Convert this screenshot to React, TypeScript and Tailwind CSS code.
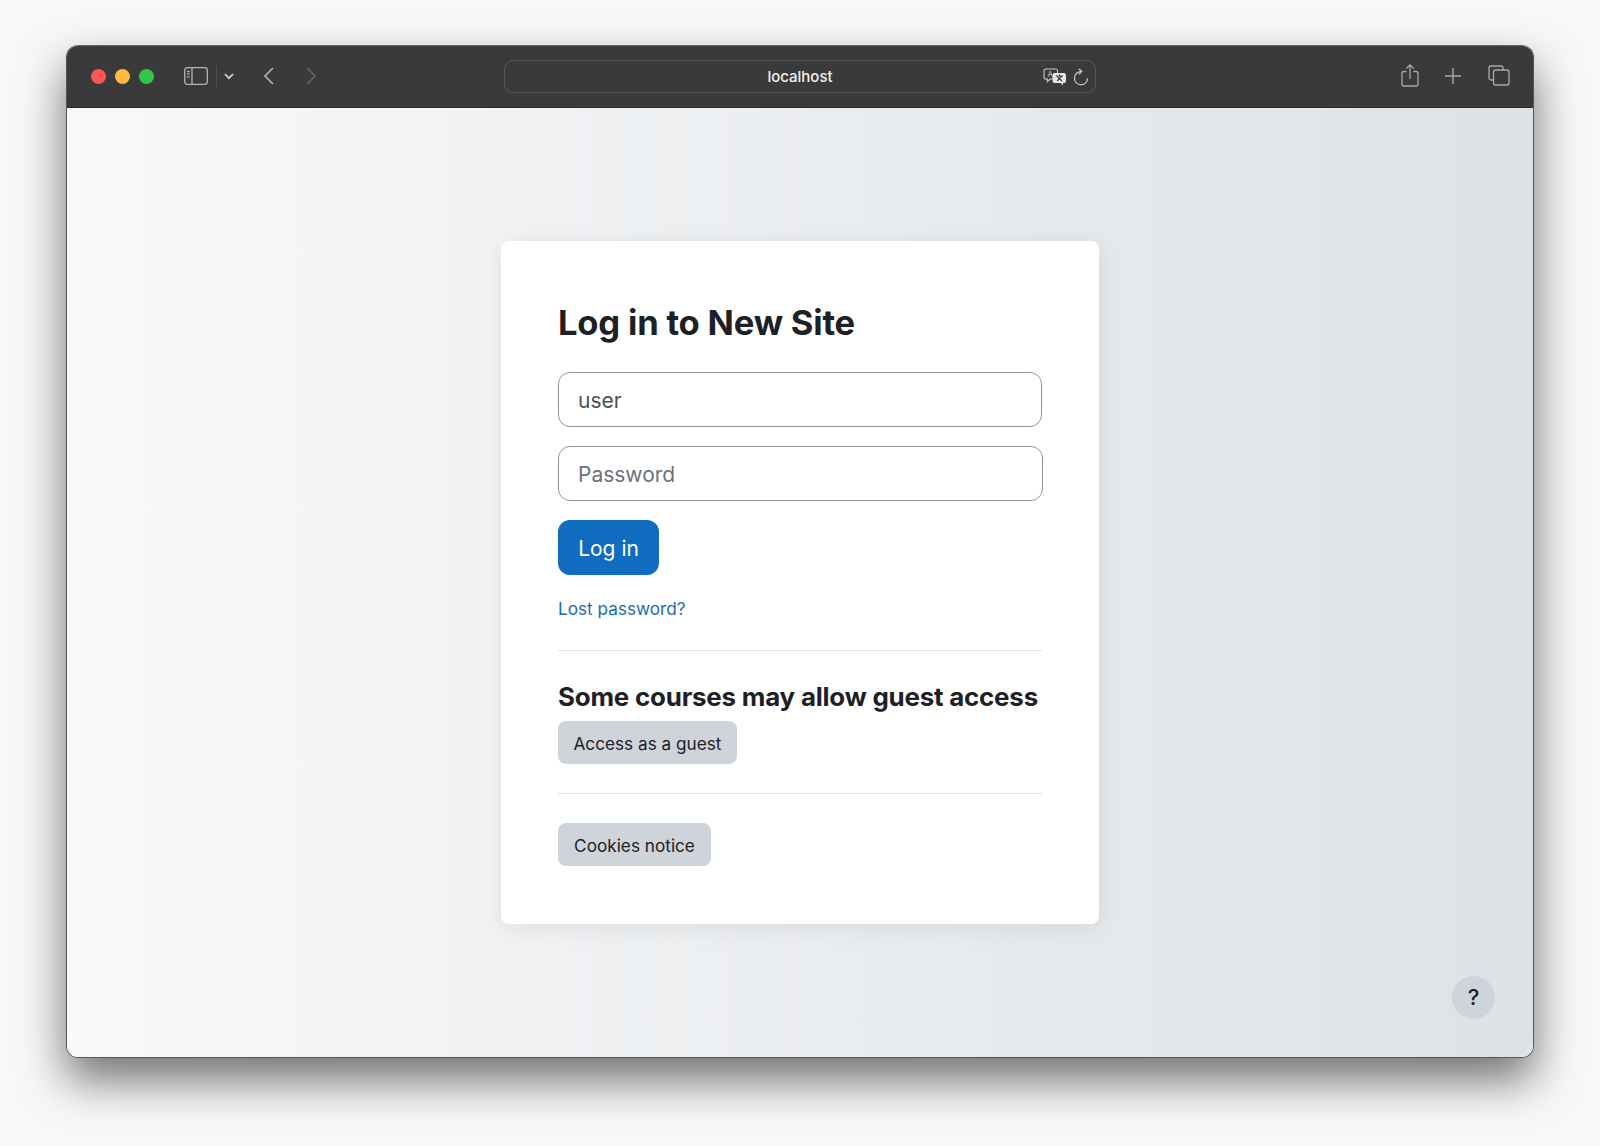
const font = "font-['Inter','Liberation_Sans',sans-serif]";

function SidebarIcon() {
  return (
    <svg width="24" height="18" viewBox="0 0 24 18" fill="none" stroke="#b4b4b4" strokeWidth="1.3">
      <rect x="0.7" y="0.7" width="22.6" height="16.6" rx="2.5" />
      <path d="M8 1v16" />
      <path d="M3 4.5h2.6M3 7.2h2.6M3 9.9h2.6" />
    </svg>
  );
}

function TranslateIcon() {
  return (
    <svg width="24" height="18" viewBox="0 0 24 18" fill="none">
      <path d="M3 1h9.5a2 2 0 0 1 2 2v6a2 2 0 0 1-2 2H7l-2.6 2.6V11H3a2 2 0 0 1-2-2V3a2 2 0 0 1 2-2z" stroke="#c8c8c8" strokeWidth="1.1" />
      <text x="4.6" y="9" fontSize="8" fill="#c8c8c8" fontFamily="Inter, sans-serif">A</text>
      <path d="M11.5 5h9.5a2 2 0 0 1 2 2v6a2 2 0 0 1-2 2h-1v2.6L17.5 15h-6a2 2 0 0 1-2-2V7a2 2 0 0 1 2-2z" fill="#e4e4e4" />
      <path d="M13 8h7M16.5 6.5V8M14.2 13l4.8-5M19 13l-4.5-4" stroke="#3a3a3a" strokeWidth="1.1" />
    </svg>
  );
}

function ReloadIcon() {
  return (
    <svg width="16" height="18" viewBox="0 0 16 18" fill="none" stroke="#c8c8c8" strokeWidth="1.2">
      <path d="M8 3.6A6.6 6.6 0 1 0 14.6 10.2" />
      <path d="M5.8 0.8 8.8 3.6 5.8 6.4" />
    </svg>
  );
}

function ShareIcon() {
  return (
    <svg width="18" height="23" viewBox="0 0 18 23" fill="none" stroke="#a8a8a8" strokeWidth="1.3">
      <path d="M5.5 7.5H3a2 2 0 0 0-2 2v10.5a2 2 0 0 0 2 2h12a2 2 0 0 0 2-2V9.5a2 2 0 0 0-2-2h-2.5" />
      <path d="M9 15V1M5.3 4.5 9 1l3.7 3.5" />
    </svg>
  );
}

function TabsIcon() {
  return (
    <svg width="22" height="21" viewBox="0 0 22 21" fill="none" stroke="#a8a8a8" strokeWidth="1.3">
      <path d="M5 15H3a2 2 0 0 1-2-2V3a2 2 0 0 1 2-2h10a2 2 0 0 1 2 2v2" />
      <rect x="5.5" y="5" width="15.5" height="15" rx="2.2" />
    </svg>
  );
}

function TitleBar() {
  return (
    <div className="h-[62px] shrink-0 bg-[#3a3a3a] flex items-center border-b border-[#2a2a2a] relative">
      <div className="flex items-center gap-[9px] ml-[24px]">
        <span className="w-[15px] h-[15px] rounded-full bg-[#fc5753]" />
        <span className="w-[15px] h-[15px] rounded-full bg-[#fdbc40]" />
        <span className="w-[15px] h-[15px] rounded-full bg-[#33c748]" />
      </div>
      <div className="ml-[30px] mb-[2px] flex items-center">
        <SidebarIcon />
      </div>
      <div className="w-px h-[21px] bg-[#4e4e4e] ml-[8px]" />
      <svg className="ml-[7px]" width="10" height="7" viewBox="0 0 10 7" fill="none" stroke="#d0d0d0" strokeWidth="1.7">
        <path d="M1 1.2 5 5.2l4-4" />
      </svg>
      <svg className="ml-[29px] mb-[2px]" width="12" height="18" viewBox="0 0 12 18" fill="none" stroke="#b4b4b4" strokeWidth="1.7">
        <path d="M10 1 2 9l8 8" />
      </svg>
      <svg className="ml-[30px] mb-[2px]" width="12" height="18" viewBox="0 0 12 18" fill="none" stroke="#646464" strokeWidth="1.7">
        <path d="M2 1l8 8-8 8" />
      </svg>
      <div className="ml-[187px] w-[592px] h-[33px] rounded-[9px] border border-[#565656] flex items-center justify-end relative pr-[6px]">
        <span className="absolute inset-0 flex items-center justify-center pt-[2px] text-[15px] font-medium text-[#f0f0f0]">localhost</span>
        <TranslateIcon />
        <span className="ml-[6px] flex"><ReloadIcon /></span>
      </div>
      <div className="flex items-center ml-auto mr-[23px] mb-[2px]">
        <ShareIcon />
        <svg className="ml-[26px]" width="16" height="16" viewBox="0 0 16 16" fill="none" stroke="#a8a8a8" strokeWidth="1.4">
          <path d="M8 0v16M0 8h16" />
        </svg>
        <span className="ml-[27px] flex"><TabsIcon /></span>
      </div>
    </div>
  );
}

function LoginCard() {
  return (
    <div className="w-[598px] h-[683px] bg-white rounded-[8px] shadow-[0_4px_24px_rgba(0,0,0,0.08)] px-[57px] pt-[58px]">
      <h1 className="text-[34.6px] leading-[46px] font-bold text-[#1d2125] tracking-[-0.2px]">Log in to New Site</h1>
      <div className="mt-[27px] h-[55px] w-[484px] rounded-[12px] border border-[#8f959e] flex items-center pt-[2px] px-[19px] text-[21px] text-[#495057]">user</div>
      <div className="mt-[19px] h-[55px] w-[485px] rounded-[12px] border border-[#8f959e] flex items-center pt-[2px] px-[19px] text-[21px] text-[#6a737b]">Password</div>
      <button className="mt-[19px] h-[55px] w-[101px] pt-[2px] rounded-[12px] bg-[#0f6cbf] text-white text-[21px] block">Log in</button>
      <a className="block mt-[21px] text-[17.2px] leading-[26px] text-[#1f6aae]">Lost password?</a>
      <hr className="mt-[28px] w-[484px] border-[#dee2e6]" />
      <h2 className="mt-[28px] text-[25.9px] leading-[36px] font-bold text-[#1d2125] tracking-[-0.2px] whitespace-nowrap">Some courses may allow guest access</h2>
      <button className="mt-[6px] h-[43px] w-[179px] pt-[2px] rounded-[8px] bg-[#ced4da] text-[#1d2125] text-[17.2px] block">Access as a guest</button>
      <hr className="mt-[29px] w-[484px] border-[#dee2e6]" />
      <button className="mt-[29px] h-[43px] w-[153px] pt-[2px] rounded-[8px] bg-[#ced4da] text-[#1d2125] text-[17.2px] block">Cookies notice</button>
    </div>
  );
}

export default function App() {
  return (
    <div className={`${font} w-[1600px] h-[1146px] bg-[#f8f8f8] pt-[45px] pl-[66px] overflow-hidden`}>
      <div className="w-[1468px] h-[1013px] rounded-[12px] overflow-hidden flex flex-col border border-[#555] border-t-[#666] shadow-[0_22px_46px_rgba(0,0,0,0.55)] relative">
        <TitleBar />
        <div className="flex-1 bg-gradient-to-r from-[#f8f9fa] to-[#dee2e6] flex justify-center pt-[133px]">
          <LoginCard />
          <button className="absolute right-[38px] bottom-[38px] w-[43px] h-[43px] rounded-full bg-[#ced4da] text-[#1d2125] text-[22px] font-medium flex items-center justify-center">?</button>
        </div>
      </div>
    </div>
  );
}
